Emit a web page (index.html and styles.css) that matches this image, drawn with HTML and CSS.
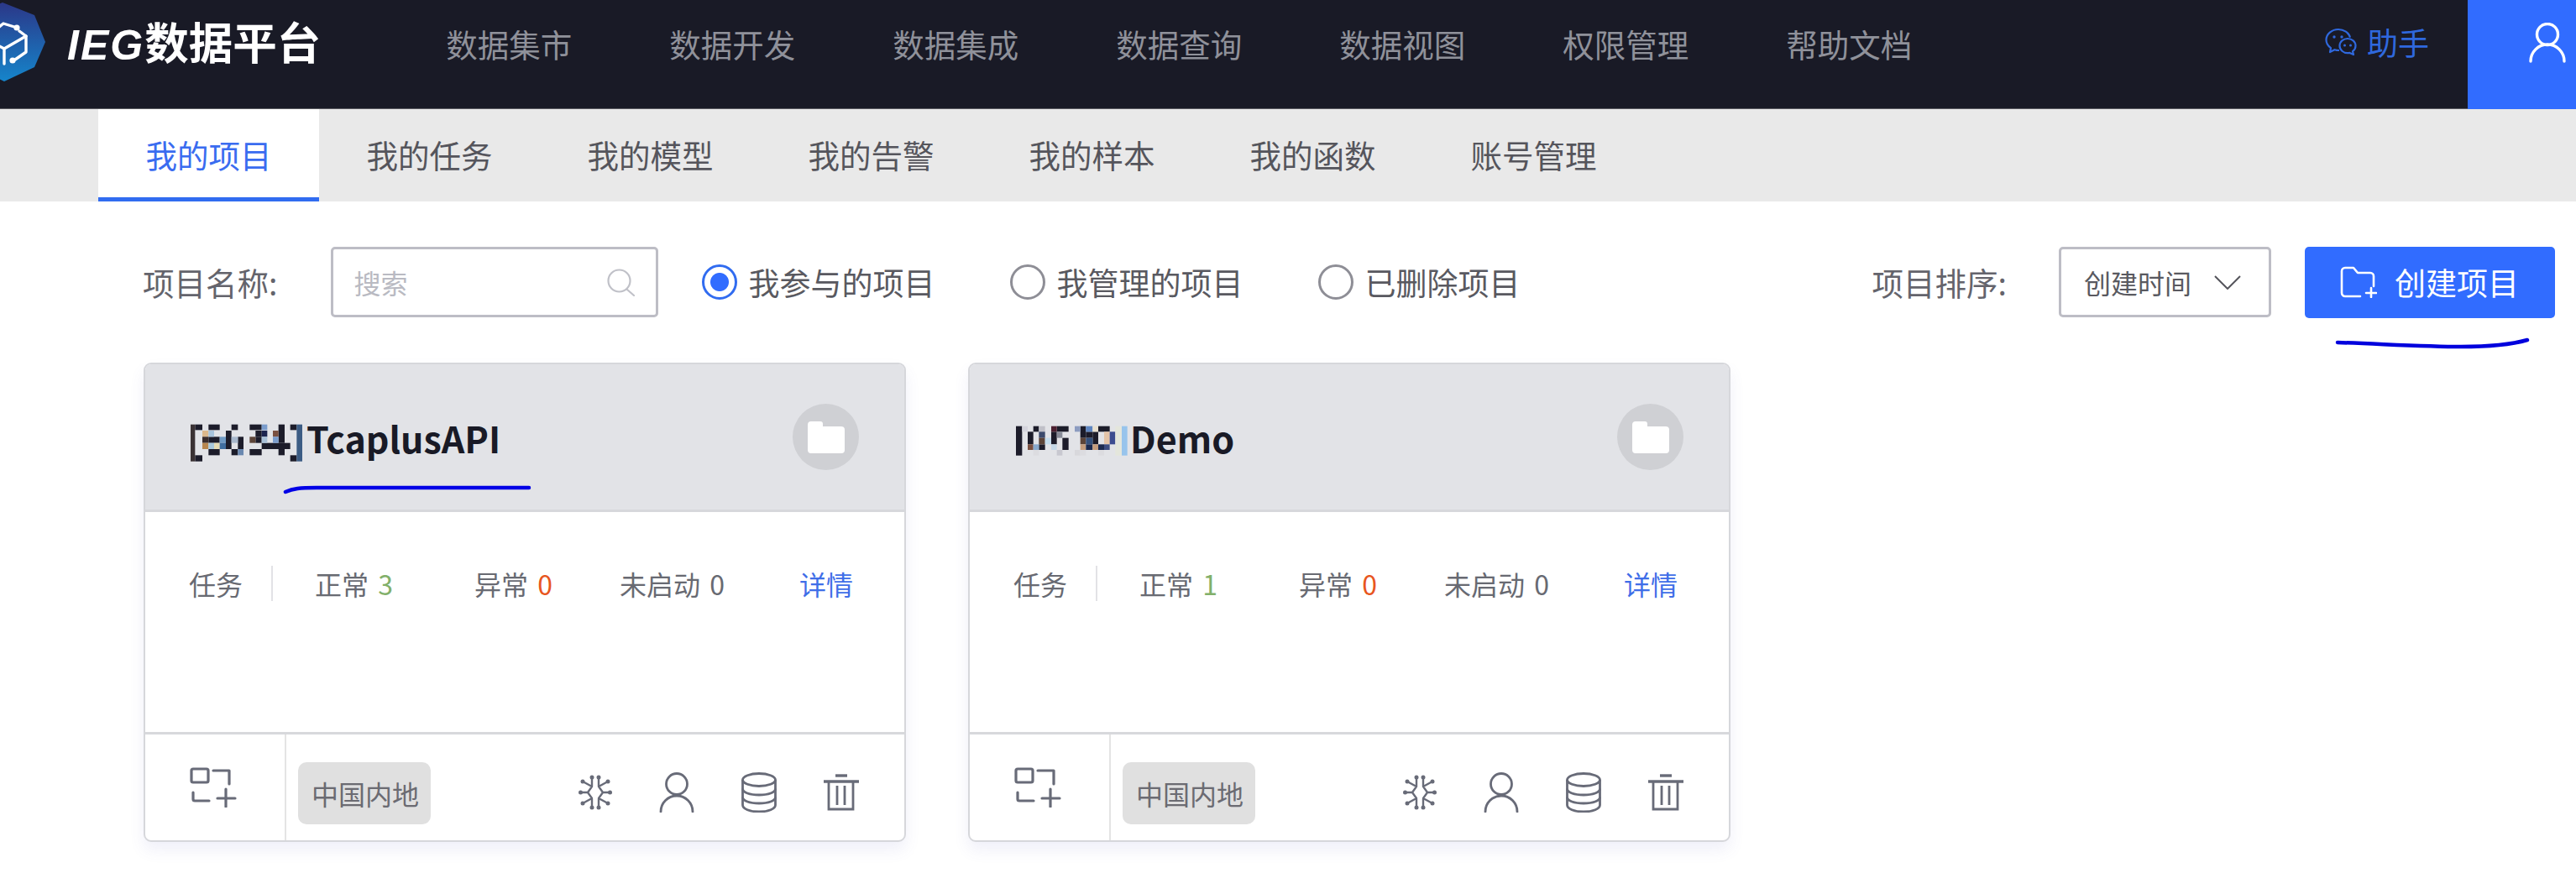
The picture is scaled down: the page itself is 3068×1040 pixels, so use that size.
FILE: index.html
```html
<!DOCTYPE html>
<html lang="zh-CN">
<head>
<meta charset="utf-8">
<title>IEG数据平台</title>
<link rel="stylesheet" href="styles.css">
</head>
<body>
<header class="topbar">
  <a class="brand">
    <svg class="brand-mark" viewBox="0 0 56 100" width="56" height="100">
      <defs><linearGradient id="hex" x1="0" y1="0" x2="0" y2="1"><stop offset="0" stop-color="#2b3788"/><stop offset="1" stop-color="#1585cb"/></linearGradient></defs>
      <path d="M3 3L41 18L54 50L41 80L5 97L-30 80V18Z" fill="url(#hex)"/>
      <g fill="none" stroke="#fff" stroke-width="3.4" stroke-linecap="round" stroke-linejoin="round">
        <path d="M-8 38L4 28L17 32"/><path d="M23 37L31 43V62L18 71"/><path d="M-22 44L5 58L31 43"/><path d="M5 58V76"/>
      </g>
      <circle cx="20" cy="33" r="3.6" fill="#fff"/><circle cx="15" cy="72" r="3.6" fill="#fff"/>
    </svg>
    <span class="brand-name"><i>IEG</i>数据平台</span>
  </a>
  <nav class="mainnav">
    <a>数据集市</a><a>数据开发</a><a>数据集成</a><a>数据查询</a><a>数据视图</a><a>权限管理</a><a>帮助文档</a>
  </nav>
  <a class="helper">
    <svg viewBox="0 0 38 34" width="38" height="34" fill="none" stroke="#2f68dd" stroke-width="2.2" stroke-linejoin="round">
      <path d="M17 27c-2 0-4-.3-5.500-.8L6 29l1-4.800C3.500 21.600 1.500 18 1.500 14.500 1.500 7.500 8.200 2 16 2c6.500 0 12.500 4 14 9.600"/>
      <path d="M27 13c5 0 9.500 3.700 9.500 8.500 0 2.800-1.300 5-3.500 6.600l1 4-4.500-2.200c-.8.200-1.600.3-2.500.3-5 0-9.500-3.700-9.500-8.700S22 13 27 13z"/>
      <g fill="#2f68dd" stroke="none"><circle cx="11" cy="11" r="1.700"/><circle cx="20" cy="11" r="1.700"/><circle cx="23.500" cy="21" r="1.500"/><circle cx="30.500" cy="21" r="1.500"/></g>
    </svg>
    <span>助手</span>
  </a>
  <a class="account">
    <svg viewBox="0 0 44 48" width="44" height="48" fill="none" stroke="#fff" stroke-width="3.400" stroke-linecap="round">
      <circle cx="22" cy="14" r="12.500"/><path d="M2 46A20 20 0 0 1 42 46"/>
    </svg>
  </a>
</header>

<div class="tabs">
  <a class="tab tab-active">我的项目</a><a class="tab">我的任务</a><a class="tab">我的模型</a><a class="tab">我的告警</a><a class="tab">我的样本</a><a class="tab">我的函数</a><a class="tab">账号管理</a>
</div>

<section class="filters">
  <div class="filter-left">
    <span class="field-label">项目名称:</span>
    <div class="search">
      <span class="placeholder">搜索</span>
      <svg viewBox="0 0 33 33" width="33" height="33" fill="none" stroke="#c0c1c8" stroke-width="2.200" stroke-linecap="round"><circle cx="14.500" cy="14.500" r="13"/><path d="M24 25L32 32"/></svg>
    </div>
    <div class="radios">
      <label class="radio radio-on"><span class="dot"></span>我参与的项目</label>
      <label class="radio"><span class="dot"></span>我管理的项目</label>
      <label class="radio"><span class="dot"></span>已删除项目</label>
    </div>
  </div>
  <div class="filter-right">
    <span class="field-label">项目排序:</span>
    <div class="select">
      <span>创建时间</span>
      <svg viewBox="0 0 32 17" width="32" height="17" fill="none" stroke="#55555c" stroke-width="2"><path d="M1 1L16 16L31 1"/></svg>
    </div>
    <a class="create">
      <svg viewBox="0 0 44 38" width="44" height="38" fill="none" stroke="#fff" stroke-width="2.600" stroke-linecap="round" stroke-linejoin="round">
        <path d="M24 36H6a4 4 0 0 1-4-4V6a4 4 0 0 1 4-4h10l5 6h15a4 4 0 0 1 4 4v12"/><path d="M31 32h12M37 26v11"/>
      </svg>
      <span>创建项目</span>
    </a>
    <svg class="scribble-create" viewBox="0 0 232 14" width="232" height="14" fill="none" stroke="#0000dd" stroke-width="4.500" stroke-linecap="round"><path d="M3 6C60 8 110 11 150 11C190 11 215 7 229 3"/></svg>
  </div>
</section>

<section class="cards">
  <article class="card">
    <div class="card-head">
      <h2 class="card-title">
        <svg class="mosaic" viewBox="0 0 459 180" width="153" height="60" role="img" aria-label="[已打码]">
          <g fill="#1c1c2a">
            <rect x="52" y="44" width="26" height="20"/><rect x="52" y="154" width="26" height="22"/><rect x="100" y="44" width="40" height="20"/><rect x="100" y="88" width="40" height="22"/><rect x="100" y="132" width="40" height="22"/>
            <rect x="162" y="66" width="20" height="66"/><rect x="182" y="44" width="23" height="20"/><rect x="205" y="88" width="20" height="44"/><rect x="182" y="132" width="23" height="22"/>
            <rect x="247" y="44" width="43" height="20"/><rect x="268" y="66" width="22" height="22"/><rect x="268" y="88" width="22" height="22"/><rect x="290" y="110" width="102" height="22"/><rect x="247" y="132" width="43" height="22"/><rect x="350" y="44" width="22" height="66"/><rect x="350" y="132" width="22" height="22"/>
            <rect x="392" y="44" width="23" height="20"/><rect x="392" y="154" width="23" height="22"/>
          </g>
          <rect x="36" y="44" width="16" height="132" fill="#3a3234"/>
          <rect x="78" y="66" width="22" height="22" fill="#dcb88c"/><rect x="100" y="66" width="20" height="22" fill="#a8c4dc"/><rect x="78" y="88" width="22" height="22" fill="#3a2c2c"/><rect x="140" y="88" width="22" height="22" fill="#6f9ac4"/>
          <rect x="78" y="110" width="22" height="22" fill="#b8864e"/><rect x="100" y="110" width="20" height="22" fill="#a8c8dc"/><rect x="120" y="110" width="20" height="22" fill="#e6dcb4"/><rect x="140" y="110" width="22" height="22" fill="#3f6ea0"/>
          <rect x="182" y="88" width="23" height="22" fill="#a8b8cc"/><rect x="205" y="132" width="20" height="22" fill="#6a88b0"/>
          <rect x="290" y="44" width="20" height="20" fill="#7a9ccc"/><rect x="290" y="66" width="20" height="22" fill="#1c2450"/><rect x="247" y="88" width="21" height="22" fill="#5c4438"/><rect x="290" y="88" width="20" height="22" fill="#a8c0d8"/>
          <rect x="330" y="66" width="20" height="22" fill="#7a5040"/><rect x="330" y="88" width="20" height="22" fill="#7a9ccc"/>
          <rect x="415" y="44" width="20" height="132" fill="#3c5c84"/>
        </svg>TcaplusAPI</h2>
      <span class="folder-badge"><svg viewBox="0 0 44 38" width="44" height="38"><path fill="#fff" d="M4 0h11a3 3 0 0 1 3 3v3h22a4 4 0 0 1 4 4v24a4 4 0 0 1-4 4H4a4 4 0 0 1-4-4V4a4 4 0 0 1 4-4z"/></svg></span>
      <svg class="scribble-title" viewBox="0 0 296 12" width="296" height="12" fill="none" stroke="#0000e6" stroke-width="4.500" stroke-linecap="round"><path d="M3 9C12 5 20 4 40 4H293"/></svg>
    </div>
    <div class="card-body">
      <div class="stats">
        <span class="stats-label">任务</span>
        <div class="stats-grid">
          <span>正常 <b class="ok">3</b></span><span>异常 <b class="bad">0</b></span><span>未启动 <b>0</b></span><a class="detail">详情</a>
        </div>
      </div>
    </div>
    <div class="card-foot">
      <span class="foot-add">
        <svg viewBox="0 0 56 48" width="56" height="48" fill="none" stroke="#686b78" stroke-width="3.200" stroke-linecap="round" stroke-linejoin="round"><rect x="2" y="2" width="20" height="16" rx="2"/><path d="M28 4H47V20"/><path d="M4 30V38a2 2 0 0 0 2 2H23"/><path d="M33 37H54M43 26V47"/></svg>
      </span>
      <span class="region">中国内地</span>
      <div class="foot-icons">
        <svg viewBox="0 0 40 42" width="40" height="42" fill="none" stroke="#686b78" stroke-width="2.400" stroke-linecap="round" stroke-linejoin="round"><path d="M16 3V14L5 8M24 3V14L35 8M16 39V28L5 34M24 39V28L35 34M16 14L11 21L16 28M24 14L29 21L24 28M2 21H11M29 21H38"/><g fill="#686b78" stroke="none"><circle cx="16" cy="3" r="2.500"/><circle cx="24" cy="3" r="2.500"/><circle cx="16" cy="39" r="2.500"/><circle cx="24" cy="39" r="2.500"/><circle cx="5" cy="8" r="2.500"/><circle cx="35" cy="8" r="2.500"/><circle cx="5" cy="34" r="2.500"/><circle cx="35" cy="34" r="2.500"/><circle cx="2.500" cy="21" r="2.500"/><circle cx="37.500" cy="21" r="2.500"/></g></svg>
        <svg viewBox="0 0 42 48" width="42" height="48" fill="none" stroke="#686b78" stroke-width="2.800" stroke-linecap="round"><circle cx="21" cy="14" r="12.500"/><path d="M2 47A19 19 0 0 1 40 47"/></svg>
        <svg viewBox="0 0 42 48" width="42" height="48" fill="none" stroke="#686b78" stroke-width="2.800"><ellipse cx="21" cy="9" rx="19.500" ry="7.500"/><path d="M1.500 9V39C1.500 43.500 10 47 21 47S40.500 43.500 40.500 39V9"/><path d="M1.500 19.500C1.500 24 10 27 21 27S40.500 24 40.500 19.500"/><path d="M1.500 29.500C1.500 34 10 37 21 37S40.500 34 40.500 29.500"/></svg>
        <svg viewBox="0 0 42 44" width="42" height="44" fill="none" stroke="#686b78" stroke-width="2.800"><path d="M14 2H28" stroke-width="3.400"/><path d="M0 9H42" stroke-width="3.400"/><path d="M6 9V42H35V9"/><path d="M16 14V37M25 14V37"/></svg>
      </div>
    </div>
  </article>

  <article class="card">
    <div class="card-head">
      <h2 class="card-title">
        <svg class="mosaic" viewBox="-9 0 456 180" width="152" height="60" role="img" aria-label="[已打码]">
          <g fill="#1c1c2a">
            <rect x="30" y="50" width="22" height="105"/><rect x="92" y="50" width="20" height="20"/><rect x="72" y="70" width="20" height="45"/><rect x="112" y="115" width="22" height="20"/>
            <rect x="176" y="50" width="42" height="20"/><rect x="156" y="70" width="20" height="45"/><rect x="196" y="92" width="22" height="43"/>
            <rect x="260" y="50" width="20" height="42"/><rect x="324" y="50" width="41" height="20"/><rect x="280" y="70" width="24" height="22"/><rect x="304" y="70" width="20" height="45"/>
          </g>
          <rect x="52" y="50" width="20" height="20" fill="#d4d4dc"/><rect x="112" y="50" width="22" height="20" fill="#c0c0c8"/><rect x="112" y="70" width="22" height="22" fill="#3c4a6c"/><rect x="112" y="92" width="22" height="23" fill="#5c4438"/><rect x="72" y="115" width="20" height="20" fill="#7a5040"/><rect x="92" y="115" width="20" height="20" fill="#88a8cc"/><rect x="92" y="135" width="20" height="20" fill="#dcdce0"/>
          <rect x="156" y="50" width="20" height="20" fill="#4c2030"/><rect x="176" y="70" width="20" height="22" fill="#888c98"/><rect x="134" y="92" width="22" height="23" fill="#c4dcec"/><rect x="156" y="115" width="20" height="20" fill="#c4d8e8"/><rect x="176" y="135" width="20" height="20" fill="#c8c8d0"/>
          <rect x="240" y="50" width="20" height="20" fill="#8c9cc0"/><rect x="260" y="92" width="20" height="23" fill="#5c4438"/><rect x="260" y="115" width="20" height="20" fill="#c49c7c"/><rect x="240" y="135" width="20" height="20" fill="#d8d8dc"/><rect x="260" y="135" width="20" height="20" fill="#dcdce0"/>
          <rect x="280" y="50" width="24" height="20" fill="#5c84c0"/><rect x="304" y="50" width="20" height="20" fill="#e8e0d0"/><rect x="280" y="92" width="24" height="23" fill="#34507c"/><rect x="345" y="70" width="20" height="45" fill="#e4c4a8"/><rect x="365" y="70" width="20" height="45" fill="#3c4c90"/><rect x="280" y="115" width="24" height="20" fill="#1c2a50"/><rect x="304" y="115" width="20" height="20" fill="#c49c7c"/><rect x="324" y="115" width="21" height="20" fill="#1c2a50"/><rect x="345" y="115" width="20" height="20" fill="#3c4c80"/><rect x="324" y="135" width="21" height="20" fill="#dcdce0"/>
          <rect x="385" y="50" width="23" height="105" fill="#e4e6dc"/><rect x="408" y="50" width="20" height="105" fill="#98c4ec"/>
        </svg>Demo</h2>
      <span class="folder-badge"><svg viewBox="0 0 44 38" width="44" height="38"><path fill="#fff" d="M4 0h11a3 3 0 0 1 3 3v3h22a4 4 0 0 1 4 4v24a4 4 0 0 1-4 4H4a4 4 0 0 1-4-4V4a4 4 0 0 1 4-4z"/></svg></span>
    </div>
    <div class="card-body">
      <div class="stats">
        <span class="stats-label">任务</span>
        <div class="stats-grid">
          <span>正常 <b class="ok">1</b></span><span>异常 <b class="bad">0</b></span><span>未启动 <b>0</b></span><a class="detail">详情</a>
        </div>
      </div>
    </div>
    <div class="card-foot">
      <span class="foot-add">
        <svg viewBox="0 0 56 48" width="56" height="48" fill="none" stroke="#686b78" stroke-width="3.200" stroke-linecap="round" stroke-linejoin="round"><rect x="2" y="2" width="20" height="16" rx="2"/><path d="M28 4H47V20"/><path d="M4 30V38a2 2 0 0 0 2 2H23"/><path d="M33 37H54M43 26V47"/></svg>
      </span>
      <span class="region">中国内地</span>
      <div class="foot-icons">
        <svg viewBox="0 0 40 42" width="40" height="42" fill="none" stroke="#686b78" stroke-width="2.400" stroke-linecap="round" stroke-linejoin="round"><path d="M16 3V14L5 8M24 3V14L35 8M16 39V28L5 34M24 39V28L35 34M16 14L11 21L16 28M24 14L29 21L24 28M2 21H11M29 21H38"/><g fill="#686b78" stroke="none"><circle cx="16" cy="3" r="2.500"/><circle cx="24" cy="3" r="2.500"/><circle cx="16" cy="39" r="2.500"/><circle cx="24" cy="39" r="2.500"/><circle cx="5" cy="8" r="2.500"/><circle cx="35" cy="8" r="2.500"/><circle cx="5" cy="34" r="2.500"/><circle cx="35" cy="34" r="2.500"/><circle cx="2.500" cy="21" r="2.500"/><circle cx="37.500" cy="21" r="2.500"/></g></svg>
        <svg viewBox="0 0 42 48" width="42" height="48" fill="none" stroke="#686b78" stroke-width="2.800" stroke-linecap="round"><circle cx="21" cy="14" r="12.500"/><path d="M2 47A19 19 0 0 1 40 47"/></svg>
        <svg viewBox="0 0 42 48" width="42" height="48" fill="none" stroke="#686b78" stroke-width="2.800"><ellipse cx="21" cy="9" rx="19.500" ry="7.500"/><path d="M1.500 9V39C1.500 43.500 10 47 21 47S40.500 43.500 40.500 39V9"/><path d="M1.500 19.500C1.500 24 10 27 21 27S40.500 24 40.500 19.500"/><path d="M1.500 29.500C1.500 34 10 37 21 37S40.500 34 40.500 29.500"/></svg>
        <svg viewBox="0 0 42 44" width="42" height="44" fill="none" stroke="#686b78" stroke-width="2.800"><path d="M14 2H28" stroke-width="3.400"/><path d="M0 9H42" stroke-width="3.400"/><path d="M6 9V42H35V9"/><path d="M16 14V37M25 14V37"/></svg>
      </div>
    </div>
  </article>
</section>
</body>
</html>
```

FILE: styles.css
```css
* { box-sizing: border-box; }
html, body { margin: 0; padding: 0; }
body {
  width: 3068px;
  height: 1040px;
  overflow: hidden;
  background: #fff;
  color: #595960;
  font-family: "Noto Sans CJK SC", "Noto Sans", sans-serif;
}
svg { display: block; flex: none; }

.topbar {
  display: flex;
  align-items: center;
  height: 130px;
  background: #191a26;
  border-bottom: 1px solid #5a5a60;
}
.brand { display: flex; align-items: center; height: 100%; padding-bottom: 29px; }
.brand-name { margin-left: 24px; color: #fff; font-size: 52.5px; font-weight: 700; line-height: 1; white-space: nowrap; }
.brand-name i { font-family: "Liberation Sans", sans-serif; font-size: 50px; font-style: italic; letter-spacing: 2px; }
.mainnav { display: flex; gap: 116px; margin-left: 149px; padding-bottom: 25px; }
.mainnav a { color: #8f919a; font-size: 37.5px; line-height: 54px; white-space: nowrap; }
.helper { display: flex; align-items: center; gap: 12px; margin-left: auto; padding-bottom: 29px; color: #2f68dd; font-size: 37px; line-height: 54px; }
.account {
  display: flex;
  align-items: center;
  width: 129px;
  height: 130px;
  margin-left: 46px;
  margin-bottom: -1px;
  padding: 0 0 28px 73px;
  background: #316cff;
}

.tabs { display: flex; height: 110px; padding-left: 117px; background: #e9e9e9; }
.tab {
  width: 263px;
  height: 110px;
  color: #55555c;
  font-size: 37.5px;
  line-height: 108px;
  text-align: center;
}
.tab-active { color: #3a6cf0; background: #fff; border-bottom: 5px solid #316cf0; }

.filters {
  display: flex;
  align-items: center;
  justify-content: space-between;
  height: 192px;
  padding: 0 25px 0 170px;
}
.filter-left, .filter-right { display: flex; align-items: center; position: relative; }
.field-label { color: #64646c; font-size: 37.5px; line-height: 54px; white-space: nowrap; }
.search {
  display: flex;
  align-items: center;
  justify-content: space-between;
  width: 390px;
  height: 84px;
  margin-left: 64px;
  padding: 0 25px 0 24px;
  border: 3px solid #bdbdc5;
  border-radius: 5px;
}
.placeholder { color: #b9bac2; font-size: 32px; }
.radios { display: flex; gap: 90px; margin-left: 52px; }
.radio { display: flex; align-items: center; gap: 13px; color: #595960; font-size: 37px; line-height: 54px; white-space: nowrap; }
.dot { display: block; width: 42px; height: 42px; border: 3px solid #8e8e96; border-radius: 50%; }
.radio-on .dot { border-color: #316cf0; background: radial-gradient(circle, #316cff 10.5px, #fff 11.5px); }

.select {
  display: flex;
  align-items: center;
  justify-content: space-between;
  width: 253px;
  height: 84px;
  margin-left: 62px;
  padding: 0 33px 0 27px;
  border: 3px solid #bdbdc5;
  border-radius: 5px;
  font-size: 32px;
}
.create {
  display: flex;
  align-items: center;
  gap: 21px;
  width: 298px;
  height: 85px;
  margin-left: 40px;
  padding-left: 42px;
  border-radius: 5px;
  background: #316cff;
  color: #fff;
  font-size: 37px;
}
.scribble-create { position: absolute; right: 30px; bottom: -37px; }

.cards { display: flex; gap: 74px; padding-left: 171px; }
.card {
  display: flex;
  flex-direction: column;
  width: 908px;
  height: 571px;
  border: 2px solid #d6d7db;
  border-radius: 9px;
  background: #fff;
  box-shadow: 0 10px 18px rgba(90, 90, 190, 0.09);
}
.card-head {
  position: relative;
  display: flex;
  align-items: center;
  justify-content: space-between;
  flex: none;
  height: 176px;
  padding: 0 54px 0 42px;
  border-bottom: 3px solid #d7d8dc;
  border-radius: 7px 7px 0 0;
  background: #e2e3e7;
}
.card-title { display: flex; align-items: center; margin: 0; color: #191a26; font-size: 43px; font-weight: 700; line-height: 60px; }
.mosaic { margin-right: -3px; }
.folder-badge { display: flex; align-items: center; justify-content: center; width: 79px; height: 79px; border-radius: 50%; background: #cfd0d4; }
.scribble-title { position: absolute; left: 164px; top: 143px; }

.card-body { flex: 1; padding-top: 62px; }
.stats { display: flex; align-items: center; height: 46px; padding-right: 61px; font-size: 32px; color: #686a72; }
.stats-label { flex: none; width: 100px; margin-left: 52px; border-right: 2px solid #e2e2e6; line-height: 42px; }
.stats-grid { display: grid; flex: 1; grid-template-columns: 190px 173px 1fr auto; padding-left: 50px; line-height: 46px; white-space: nowrap; }
.stats-grid b { margin-left: 4px; font-weight: 400; }
.ok { color: #82b06a; }
.bad { color: #e8561e; }
.detail { color: #3f6ee8; }

.card-foot { display: flex; align-items: center; flex: none; height: 129px; border-top: 3px solid #d7d8dc; }
.foot-add { display: flex; align-items: center; justify-content: center; flex: none; width: 168px; height: 100%; padding-right: 4px; border-right: 2px solid #e4e4e4; }
.region { flex: none; margin: 14px 0 0 14px; padding: 0 14px 0 16px; height: 74px; border-radius: 10px; background: #e0e0e0; color: #6b6b72; font-size: 32px; line-height: 74px; white-space: nowrap; }
.foot-icons { display: flex; align-items: center; gap: 56px; margin: 12px 0 0 auto; padding-right: 54px; }
```
